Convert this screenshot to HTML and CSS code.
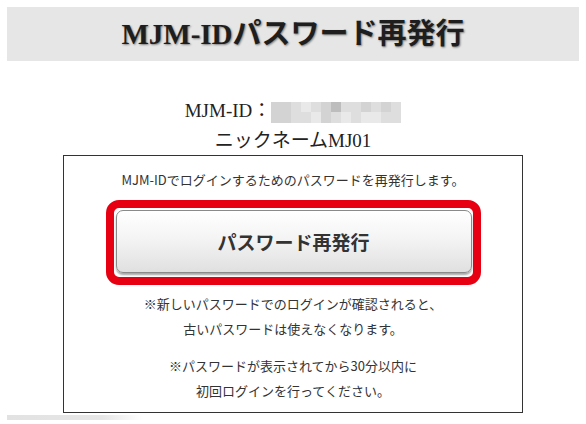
FILE: index.html
```html
<!DOCTYPE html>
<html lang="ja">
<head>
<meta charset="utf-8">
<title>MJM-IDパスワード再発行</title>
<link rel="stylesheet" href="styles.css">
</head>
<body>
<header class="page-head">
  <h1 class="page-title">MJM-IDパスワード再発行</h1>
</header>
<section class="account">
  <p class="account-line">MJM-ID：<span class="mosaic" aria-label="非表示"><i class="m2"></i><i class="m2"></i><i class="m3"></i><i class="m4"></i><i class="m3"></i><i class="m2"></i><i class="m1"></i><i class="m3"></i><i class="m3"></i><i class="m2"></i><i class="m3"></i><i class="m2"></i><i class="m3"></i><i class="m2"></i><i class="m2"></i><i class="m3"></i><i class="m3"></i><i class="m4"></i><i class="m2"></i><i class="m3"></i><i class="m4"></i><i class="m3"></i><i class="m4"></i><i class="m4"></i><i class="m3"></i><i class="m3"></i></span></p>
  <p class="account-line">ニックネームMJ01</p>
</section>
<section class="panel">
  <p class="panel-lead">MJM-IDでログインするためのパスワードを再発行します。</p>
  <div class="highlight">
    <button class="reissue-btn" type="button">パスワード再発行</button>
  </div>
  <p class="note">※新しいパスワードでのログインが確認されると、<br>古いパスワードは使えなくなります。</p>
  <p class="note note-gap">※パスワードが表示されてから30分以内に<br>初回ログインを行ってください。</p>
</section>
<div class="foot-strip"></div>
</body>
</html>
```

FILE: styles.css
```css
html, body {
  margin: 0;
  padding: 0;
  background: #ffffff;
}
body {
  padding: 7px 7px 0;
  font-family: "Liberation Serif", "Noto Sans CJK JP", serif;
  color: #222;
}
p { margin: 0; }

.page-head {
  height: 54px;
  background: #e6e6e6;
  display: flex;
  align-items: center;
  justify-content: center;
}
.page-title {
  margin: 0;
  font-family: "Liberation Serif", "Noto Sans CJK JP", serif;
  font-weight: 700;
  font-size: 29px;
  line-height: 1;
  color: #1e1e1e;
  text-shadow: 1px 1px 2px rgba(0, 0, 0, 0.45);
}

.account {
  margin-top: 35px;
  text-align: center;
}
.account-line {
  height: 30px;
  font-size: 19px;
  line-height: 30px;
  color: #222;
}
.account-line + .account-line { height: 29px; }
.mosaic {
  display: inline-grid;
  grid-template-columns: repeat(13, 10px);
  grid-template-rows: 10px 11px;
  width: 130px;
  height: 21px;
  vertical-align: middle;
}
.mosaic i { display: block; }
.m1 { background: #bdbdbd; }
.m2 { background: #d3d3d3; }
.m3 { background: #dedede; }
.m4 { background: #e9e9e9; }

.panel {
  width: 458px;
  margin: 0 auto;
  border: 1px solid #333;
  padding: 11px 0 9px;
  text-align: center;
  font-family: "Noto Sans CJK JP", "Noto Sans", sans-serif;
  color: #333;
}
.panel-lead {
  font-size: 13px;
  line-height: 25px;
}
.highlight {
  width: 356px;
  margin: 8px auto 0;
  padding: 2px 1px 4px 2px;
  border: 8px solid #e60012;
  border-radius: 13px;
}
.reissue-btn {
  display: block;
  width: 100%;
  height: 63px;
  margin: 0;
  padding: 0;
  border: 1px solid #8a8a8a;
  border-radius: 7px;
  background: linear-gradient(#ffffff 0%, #f4f4f4 45%, #e0e0e0 100%);
  box-shadow: 0 2px 2px rgba(0, 0, 0, 0.35), inset 0 1px 0 #fff;
  font-family: "Noto Sans CJK JP", "Noto Sans", sans-serif;
  font-size: 19px;
  font-weight: 700;
  color: #333;
  cursor: pointer;
}
.note {
  margin-top: 6px;
  font-size: 13px;
  line-height: 25px;
}
.note.note-gap { margin-top: 12px; }

.foot-strip {
  margin-top: 2px;
  width: 136px;
  height: 5px;
  background: linear-gradient(to right, #e2e2e2 0%, #e6e6e6 70%, rgba(230, 230, 230, 0) 100%);
}
```
